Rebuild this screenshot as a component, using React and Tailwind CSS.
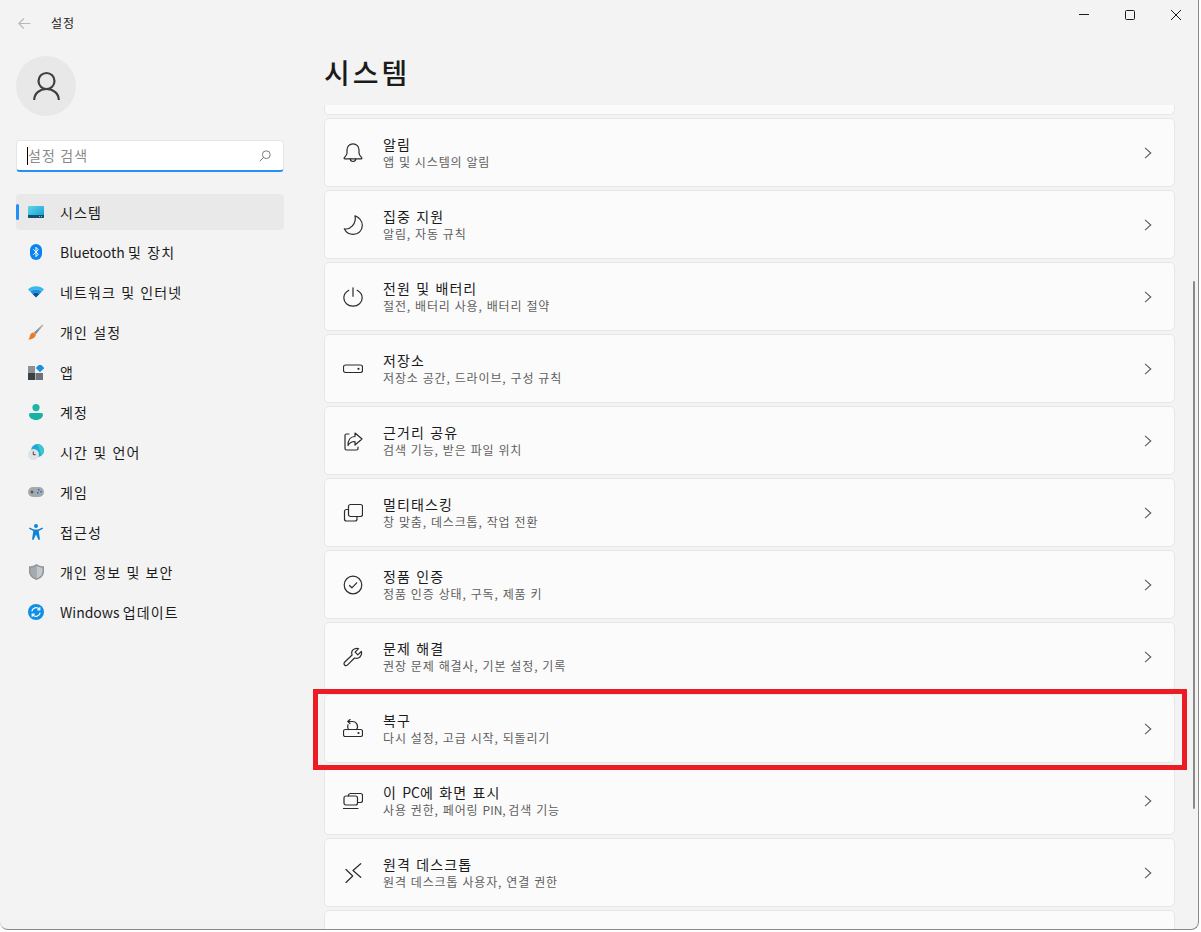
import { useState } from "react";

const Stroke = ({ children, size = 20 }) => (
    <svg width={size} height={size} viewBox="0 0 20 20" fill="none" stroke="#2b2b2b" strokeWidth="1.2" strokeLinecap="round" strokeLinejoin="round">
        {children}
    </svg>
);

const BellIcon = () => (
    <Stroke>
        <path d="M10 .8C6.400.8 4 3.500 4 6.800v3.500c0 1.500-1.300 3-2.800 4.600-.3.400 0 .9.500.9h16.600c.5 0 .8-.5.5-.9C17.300 13.300 16 11.800 16 10.300V6.800C16 3.500 13.600.8 10 .8z" />
        <path d="M7.300 15.800c0 1.500 1.200 2.700 2.700 2.700s2.700-1.200 2.700-2.700" />
    </Stroke>
);
const MoonIcon = () => (
    <Stroke>
        <path d="M12 .8c4 1.700 7.300 5 7.300 9.700 0 5-4 8.900-9 8.900-4 0-7.500-2.400-9-5.600C7 15 13.700 9 12 .8z" />
    </Stroke>
);
const PowerIcon = () => (
    <Stroke>
        <path d="M10 .8v8.500" />
        <path d="M5.800 3.300C2.800 5 .8 7.800 .8 10.800c0 4.700 4 8.400 9.200 8.400s9.200-3.700 9.200-8.400c0-3-2-5.800-5-7.500" />
    </Stroke>
);
const StorageIcon = () => (
    <Stroke>
        <rect x="0.500" y="6" width="19" height="7.500" rx="2" />
        <circle cx="15.500" cy="9.800" r="0.500" fill="#2b2b2b" />
    </Stroke>
);
const ShareIcon = () => (
    <Stroke>
        <path d="M6 3H3.500A1.500 1.500 0 0 0 2 4.500v13A1.500 1.500 0 0 0 3.500 19h10a1.500 1.500 0 0 0 1.500-1.500V16" />
        <path d="M12 2l7 6-7 6v-3.500c-3 0-5.500 1-7 4 0-5.500 2.500-9 7-9z" />
    </Stroke>
);
const MultitaskIcon = () => (
    <Stroke>
        <rect x="5.500" y="1.500" width="14" height="12" rx="2" />
        <path d="M5.500 6.500h-2a2 2 0 0 0-2 2V16a2 2 0 0 0 2 2H12a2 2 0 0 0 2-2v-2.500" />
    </Stroke>
);
const CheckCircleIcon = () => (
    <Stroke>
        <circle cx="10" cy="10" r="8.800" />
        <path d="M6.500 10.500l2.400 2.300 4.800-5" />
    </Stroke>
);
const WrenchIcon = () => (
    <Stroke>
        <path d="M18.300 4.400l-3.500 3.500-2.700-2.700 3.500-3.500c-2.400-.9-5.500.1-6.500 2.400-.6 1.400-.5 2.700 0 3.900L1.800 15c-1 1-1 2.200-.2 3 .8.800 2 .8 3-.2l6.900-6.800c1.200.5 2.500.6 3.900 0 2.300-1 3.800-4.200 2.900-6.600z" />
    </Stroke>
);
const RecoveryIcon = () => (
    <Stroke>
        <rect x="0.500" y="10.500" width="19" height="7" rx="1.800" />
        <path d="M5 2.500h4.500a5 5 0 0 1 4 8" />
        <path d="M5 5.800a5 5 0 0 0 .5 4.700" />
        <path d="M7 .5L4.800 2.500 7 4.500" />
        <circle cx="15.500" cy="14" r="0.500" fill="#2b2b2b" />
    </Stroke>
);
const ProjectIcon = () => (
    <Stroke>
        <path d="M5.500 5V4.500a2 2 0 0 1 2-2h10a2 2 0 0 1 2 2v5a2 2 0 0 1-2 2h-3" />
        <rect x="1" y="5" width="13.500" height="9" rx="2" />
        <path d="M.5 17.500h14.500" />
    </Stroke>
);
const RemoteIcon = () => (
    <Stroke>
        <path d="M3 6.500l6.700 6.500L3 19.500" />
        <path d="M17.700 .7L10 7.500l7.700 6.800" />
    </Stroke>
);

const SystemIcon = () => (
    <svg width="16" height="12" viewBox="0 0 16 12">
        <defs>
            <linearGradient id="sys" x1="0" y1="0" x2="1" y2="1">
                <stop offset="0" stopColor="#5fd6e6" />
                <stop offset="1" stopColor="#0f9ad6" />
            </linearGradient>
        </defs>
        <rect width="16" height="12" rx="1" fill="url(#sys)" />
        <path d="M0 9h16v2a1 1 0 0 1-1 1H1a1 1 0 0 1-1-1z" fill="#114f73" />
        <rect x="11" y="10" width="1" height="1" fill="#9bd" />
        <rect x="13" y="10" width="1" height="1" fill="#9bd" />
    </svg>
);
const BluetoothIcon = () => (
    <svg width="12" height="16" viewBox="0 0 12 16">
        <rect width="12" height="16" rx="6" fill="#0a84f0" />
        <path d="M3.300 5.300L8.300 10.200 6 12.700V3.300L8.300 5.800 3.300 10.700" fill="none" stroke="#fff" strokeWidth="1" />
    </svg>
);
const WifiIcon = () => (
    <svg width="16" height="12" viewBox="0 0 16 12">
        <path d="M0 3.500C4-.8 12-.8 16 3.500l-2.300 2.300C10.300 2.800 5.700 2.800 2.300 5.800z" fill="#35b8ee" />
        <path d="M2.300 5.800C5.700 2.800 10.300 2.800 13.700 5.800L11.500 8C9.300 6.300 6.700 6.300 4.500 8z" fill="#1a8fe0" />
        <path d="M4.500 8C6.700 6.300 9.300 6.300 11.500 8L8 11.500z" fill="#0b4f94" />
    </svg>
);
const BrushIcon = () => (
    <svg width="16" height="16" viewBox="0 0 16 16">
        <defs>
            <linearGradient id="bru" x1="0" y1="1" x2="1" y2="0">
                <stop offset="0" stopColor="#6f7880" />
                <stop offset="1" stopColor="#b9c0c6" />
            </linearGradient>
        </defs>
        <path d="M6 8.500L14.500 0.300l1 1L8 10z" fill="url(#bru)" />
        <path d="M5.500 8.500L8 10.500C7.500 13.500 4 15.500 0 15.500c1.500-1 1.500-2.500 2.200-4.500.5-1.300 1.800-2.300 3.300-2.500z" fill="#ee7a22" />
    </svg>
);
const AppsIcon = () => (
    <svg width="16" height="15" viewBox="0 0 16 15">
        <rect x="0" y="1" width="7" height="7" fill="#8c9197" />
        <rect x="0" y="8" width="7" height="7" fill="#3c3f43" />
        <rect x="7.500" y="8" width="7.500" height="7" fill="#6d7278" />
        <rect x="9" y="0" width="6" height="6" transform="rotate(45 12 3)" fill="#1a8fe0" />
    </svg>
);
const AccountIcon = () => (
    <svg width="14" height="16" viewBox="0 0 14 16">
        <circle cx="7" cy="3.600" r="3.600" fill="#1eb5a6" />
        <path d="M0 10.500A1.500 1.500 0 0 1 1.500 9h11a1.500 1.500 0 0 1 1.500 1.500c0 3-3 5.500-7 5.500s-7-2.500-7-5.500z" fill="#18b2a3" />
    </svg>
);
const TimeIcon = () => (
    <svg width="16" height="16" viewBox="0 0 16 16">
        <circle cx="9.500" cy="6.500" r="6.500" fill="#21a6d6" />
        <path d="M9.500 0a6.500 6.500 0 0 1 6.500 6.500c0 2-1 3.500-2.500 5L10 2z" fill="#35c9c9" />
        <circle cx="5.500" cy="10.500" r="5.500" fill="#dfe2e5" />
        <path d="M5.300 7.500v3.200h2.400" fill="none" stroke="#444" strokeWidth="1" />
    </svg>
);
const GameIcon = () => (
    <svg width="16" height="10" viewBox="0 0 16 10">
        <rect width="16" height="10" rx="5" fill="#a4a9ae" />
        <path d="M2.500 5h3M4 3.500v3" stroke="#3c3f43" strokeWidth="1" />
        <rect x="10" y="2" width="1.500" height="1.500" fill="#1a6fd0" />
        <rect x="12.300" y="4" width="1.500" height="1.500" fill="#1a6fd0" />
        <rect x="9" y="5" width="1.500" height="1.500" fill="#1a6fd0" />
    </svg>
);
const AccessIcon = () => (
    <svg width="14" height="16" viewBox="0 0 14 16">
        <circle cx="7" cy="2" r="2" fill="#1183d6" />
        <path d="M.500 3.500L5 5.500h4l4.500-2 .5 1.200L9.700 7 11 15.500 9.500 16 7 10.500 4.500 16 3 15.500 4.300 7 0 4.700z" fill="#1183d6" />
    </svg>
);
const ShieldIcon = () => (
    <svg width="15" height="16" viewBox="0 0 15 16">
        <path d="M7.500 0C9.500 1.500 12 2.300 15 2.300v5.200c0 4-3 7-7.500 8.500C3 14.500 0 11.500 0 7.500V2.300C3 2.300 5.500 1.500 7.500 0z" fill="#8e9499" />
        <path d="M7.500 1.800c1.700 1.100 3.800 1.800 6 1.900v3.800c0 3.200-2.300 5.600-6 7z" fill="#c3c7ca" />
        <path d="M7.500 1.800c-1.700 1.100-3.800 1.800-6 1.900v3.800c0 3.200 2.300 5.600 6 7z" fill="#a6abaf" />
    </svg>
);
const UpdateIcon = () => (
    <svg width="16" height="16" viewBox="0 0 16 16">
        <circle cx="8" cy="8" r="8" fill="#0f8fe6" />
        <path d="M3.800 7.300A4.300 4.300 0 0 1 11.300 5.200M12.200 8.700A4.300 4.300 0 0 1 4.700 10.800" fill="none" stroke="#fff" strokeWidth="1.200" />
        <path d="M11.800 3.300v2.500H9.300M4.200 12.700v-2.500h2.500" fill="none" stroke="#fff" strokeWidth="1.200" />
    </svg>
);

const navItems = [
    { label: "시스템", icon: <SystemIcon />, active: true },
    { label: "Bluetooth 및 장치", icon: <BluetoothIcon /> },
    { label: "네트워크 및 인터넷", icon: <WifiIcon /> },
    { label: "개인 설정", icon: <BrushIcon /> },
    { label: "앱", icon: <AppsIcon /> },
    { label: "계정", icon: <AccountIcon /> },
    { label: "시간 및 언어", icon: <TimeIcon /> },
    { label: "게임", icon: <GameIcon /> },
    { label: "접근성", icon: <AccessIcon /> },
    { label: "개인 정보 및 보안", icon: <ShieldIcon /> },
    { label: "Windows 업데이트", icon: <UpdateIcon /> },
];

const settings = [
    { title: "알림", sub: "앱 및 시스템의 알림", icon: <BellIcon /> },
    { title: "집중 지원", sub: "알림, 자동 규칙", icon: <MoonIcon /> },
    { title: "전원 및 배터리", sub: "절전, 배터리 사용, 배터리 절약", icon: <PowerIcon /> },
    { title: "저장소", sub: "저장소 공간, 드라이브, 구성 규칙", icon: <StorageIcon /> },
    { title: "근거리 공유", sub: "검색 기능, 받은 파일 위치", icon: <ShareIcon /> },
    { title: "멀티태스킹", sub: "창 맞춤, 데스크톱, 작업 전환", icon: <MultitaskIcon /> },
    { title: "정품 인증", sub: "정품 인증 상태, 구독, 제품 키", icon: <CheckCircleIcon /> },
    { title: "문제 해결", sub: "권장 문제 해결사, 기본 설정, 기록", icon: <WrenchIcon /> },
    { title: "복구", sub: "다시 설정, 고급 시작, 되돌리기", icon: <RecoveryIcon /> },
    { title: "이 PC에 화면 표시", sub: "사용 권한, 페어링 PIN, 검색 기능", icon: <ProjectIcon /> },
    { title: "원격 데스크톱", sub: "원격 데스크톱 사용자, 연결 권한", icon: <RemoteIcon /> },
];

// hangul runs get wider spacing, latin stays as it is
const Ko = ({ text, spacing }) =>
    text.split(/([^\x00-\x7f][^A-Za-z]*)/).map((part, i) =>
        /[^\x00-\x7f]/.test(part) ? (
            <span key={i} className={spacing}>{part}</span>
        ) : (
            part
        )
    );

const SettingCard = ({ title, sub, icon }) => (
    <div className="h-[69px] shrink-0 flex items-center bg-[#fbfbfb] border border-[#e7e7e7] rounded-[5px]">
        <div className="w-[58px] pl-[18px] flex items-center shrink-0">{icon}</div>
        <div className="flex-1 flex flex-col pt-px">
            <div className="text-[14px] leading-[17px] text-[#1b1b1b]"><Ko text={title} spacing="tracking-[1.1px] [word-spacing:1px]" /></div>
            <div className="mt-px text-[12px] leading-[16px] text-[#5f5f5f]"><Ko text={sub} spacing="tracking-[0.85px] [word-spacing:0.5px]" /></div>
        </div>
        <svg className="mr-[22px]" width="8" height="12" viewBox="0 0 8 12" fill="none" stroke="#5a5a5a" strokeWidth="1.100">
            <path d="M1 .8L6.800 6 1 11.200" />
        </svg>
    </div>
);

const App = () => {
    const [query, setQuery] = useState("");

    return (
        <div className="relative w-[1201px] h-[932px] overflow-hidden bg-white font-['Noto_Sans_CJK_KR','Noto_Sans',sans-serif]">
            <div className="w-[1199px] h-[930px] flex bg-[#f3f3f3] rounded-b-[8px] border-b border-r border-[#8a8a8a]">
                <aside className="w-[300px] shrink-0 flex flex-col pl-[16px] pr-[16px]">
                    <div className="h-[46px] flex items-center pl-[2px]">
                        <svg width="13" height="11" viewBox="0 0 13 11" fill="none" stroke="#b8b8b8" strokeWidth="1.100">
                            <path d="M12.500 5.500H.8M5.800.5L.8 5.500l5 5" />
                        </svg>
                        <span className="ml-[20px] text-[12px] tracking-[1px] text-[#1b1b1b]">설정</span>
                    </div>
                    <div className="mt-[10px] w-[60px] h-[60px] rounded-full bg-[#e8e8e8] flex items-center justify-center">
                        <svg width="27" height="30" viewBox="0 0 27 30" fill="none" stroke="#404040" strokeWidth="2.200">
                            <circle cx="13.500" cy="10" r="8" />
                            <path d="M1.200 29c0-6.500 5.300-11 12.300-11s12.300 4.500 12.300 11" />
                        </svg>
                    </div>
                    <div className="mt-[24px] h-[32px] flex items-center bg-white border border-[#e5e5e5] border-b-2 border-b-[#2390f5] rounded-[4px] pl-[10px] pr-[12px]">
                        <div className="w-px h-[18px] bg-black shrink-0" />
                        <input
                            className="flex-1 min-w-0 outline-none text-[14px] tracking-[1.1px] placeholder:text-[#8a8a8a] bg-transparent"
                            placeholder="설정 검색"
                            value={query}
                            onChange={(e) => setQuery(e.target.value)}
                        />
                        <svg width="12" height="12" viewBox="0 0 12 12" fill="none" stroke="#6a6a6a" strokeWidth="0.900">
                            <circle cx="7.300" cy="4.700" r="3.900" />
                            <path d="M4.500 7.500L.8 11.200" />
                        </svg>
                    </div>
                    <nav className="mt-[22px] flex flex-col">
                        {navItems.map((item) => (
                            <div
                                key={item.label}
                                className={`relative h-[36px] mb-[4px] flex items-center rounded-[4px] ${item.active ? "bg-[#e9e9e9]" : ""}`}
                            >
                                {item.active && <div className="absolute left-0 top-[10px] w-[3px] h-[16px] rounded-full bg-[#2390f5]" />}
                                <div className="w-[44px] pl-[12px] shrink-0">
                                    <div className="w-[16px] flex justify-center">{item.icon}</div>
                                </div>
                                <span className="text-[14px] text-[#1b1b1b]"><Ko text={item.label} spacing="tracking-[1.1px] [word-spacing:1px]" /></span>
                            </div>
                        ))}
                    </nav>
                </aside>
                <main className="flex-1 min-w-0 flex flex-col pl-[24px]">
                    <h1 className="h-[105px] pt-[47px] text-[28px] leading-[50px] font-medium tracking-[3px] text-[#1b1b1b]">시스템</h1>
                    <div className="flex-1 min-h-0 overflow-hidden w-[851px] flex flex-col gap-[3px]">
                        <div className="h-[10px] shrink-0 bg-[#fbfbfb] border-b border-x border-[#e7e7e7] rounded-b-[5px]" />
                        {settings.map((s) => (
                            <SettingCard key={s.title} {...s} />
                        ))}
                        <div className="h-[69px] shrink-0 bg-[#fbfbfb] border border-[#e7e7e7] rounded-[5px]" />
                    </div>
                </main>
            </div>
            {/* window controls */}
            <div className="absolute top-[10px] right-[20px] flex items-center gap-[36px]">
                <svg width="10" height="10" viewBox="0 0 10 10" stroke="#1b1b1b" strokeWidth="1"><path d="M0 4.500h10" /></svg>
                <svg width="10" height="10" viewBox="0 0 10 10" fill="none" stroke="#1b1b1b" strokeWidth="1"><rect x=".5" y=".5" width="9" height="9" rx="1" /></svg>
                <svg width="10" height="10" viewBox="0 0 10 10" stroke="#1b1b1b" strokeWidth="1"><path d="M0 0l10 10M10 0L0 10" /></svg>
            </div>
            {/* scrollbar thumb */}
            <div className="absolute left-[1193px] top-[281px] w-[2px] h-[528px] rounded-full bg-[#8a8a8a]" />
            {/* red annotation */}
            <div className="absolute left-[313px] top-[689px] w-[874px] h-[81px] border-[5px] border-[#ed1c24]" />
        </div>
    );
};

export default App;
